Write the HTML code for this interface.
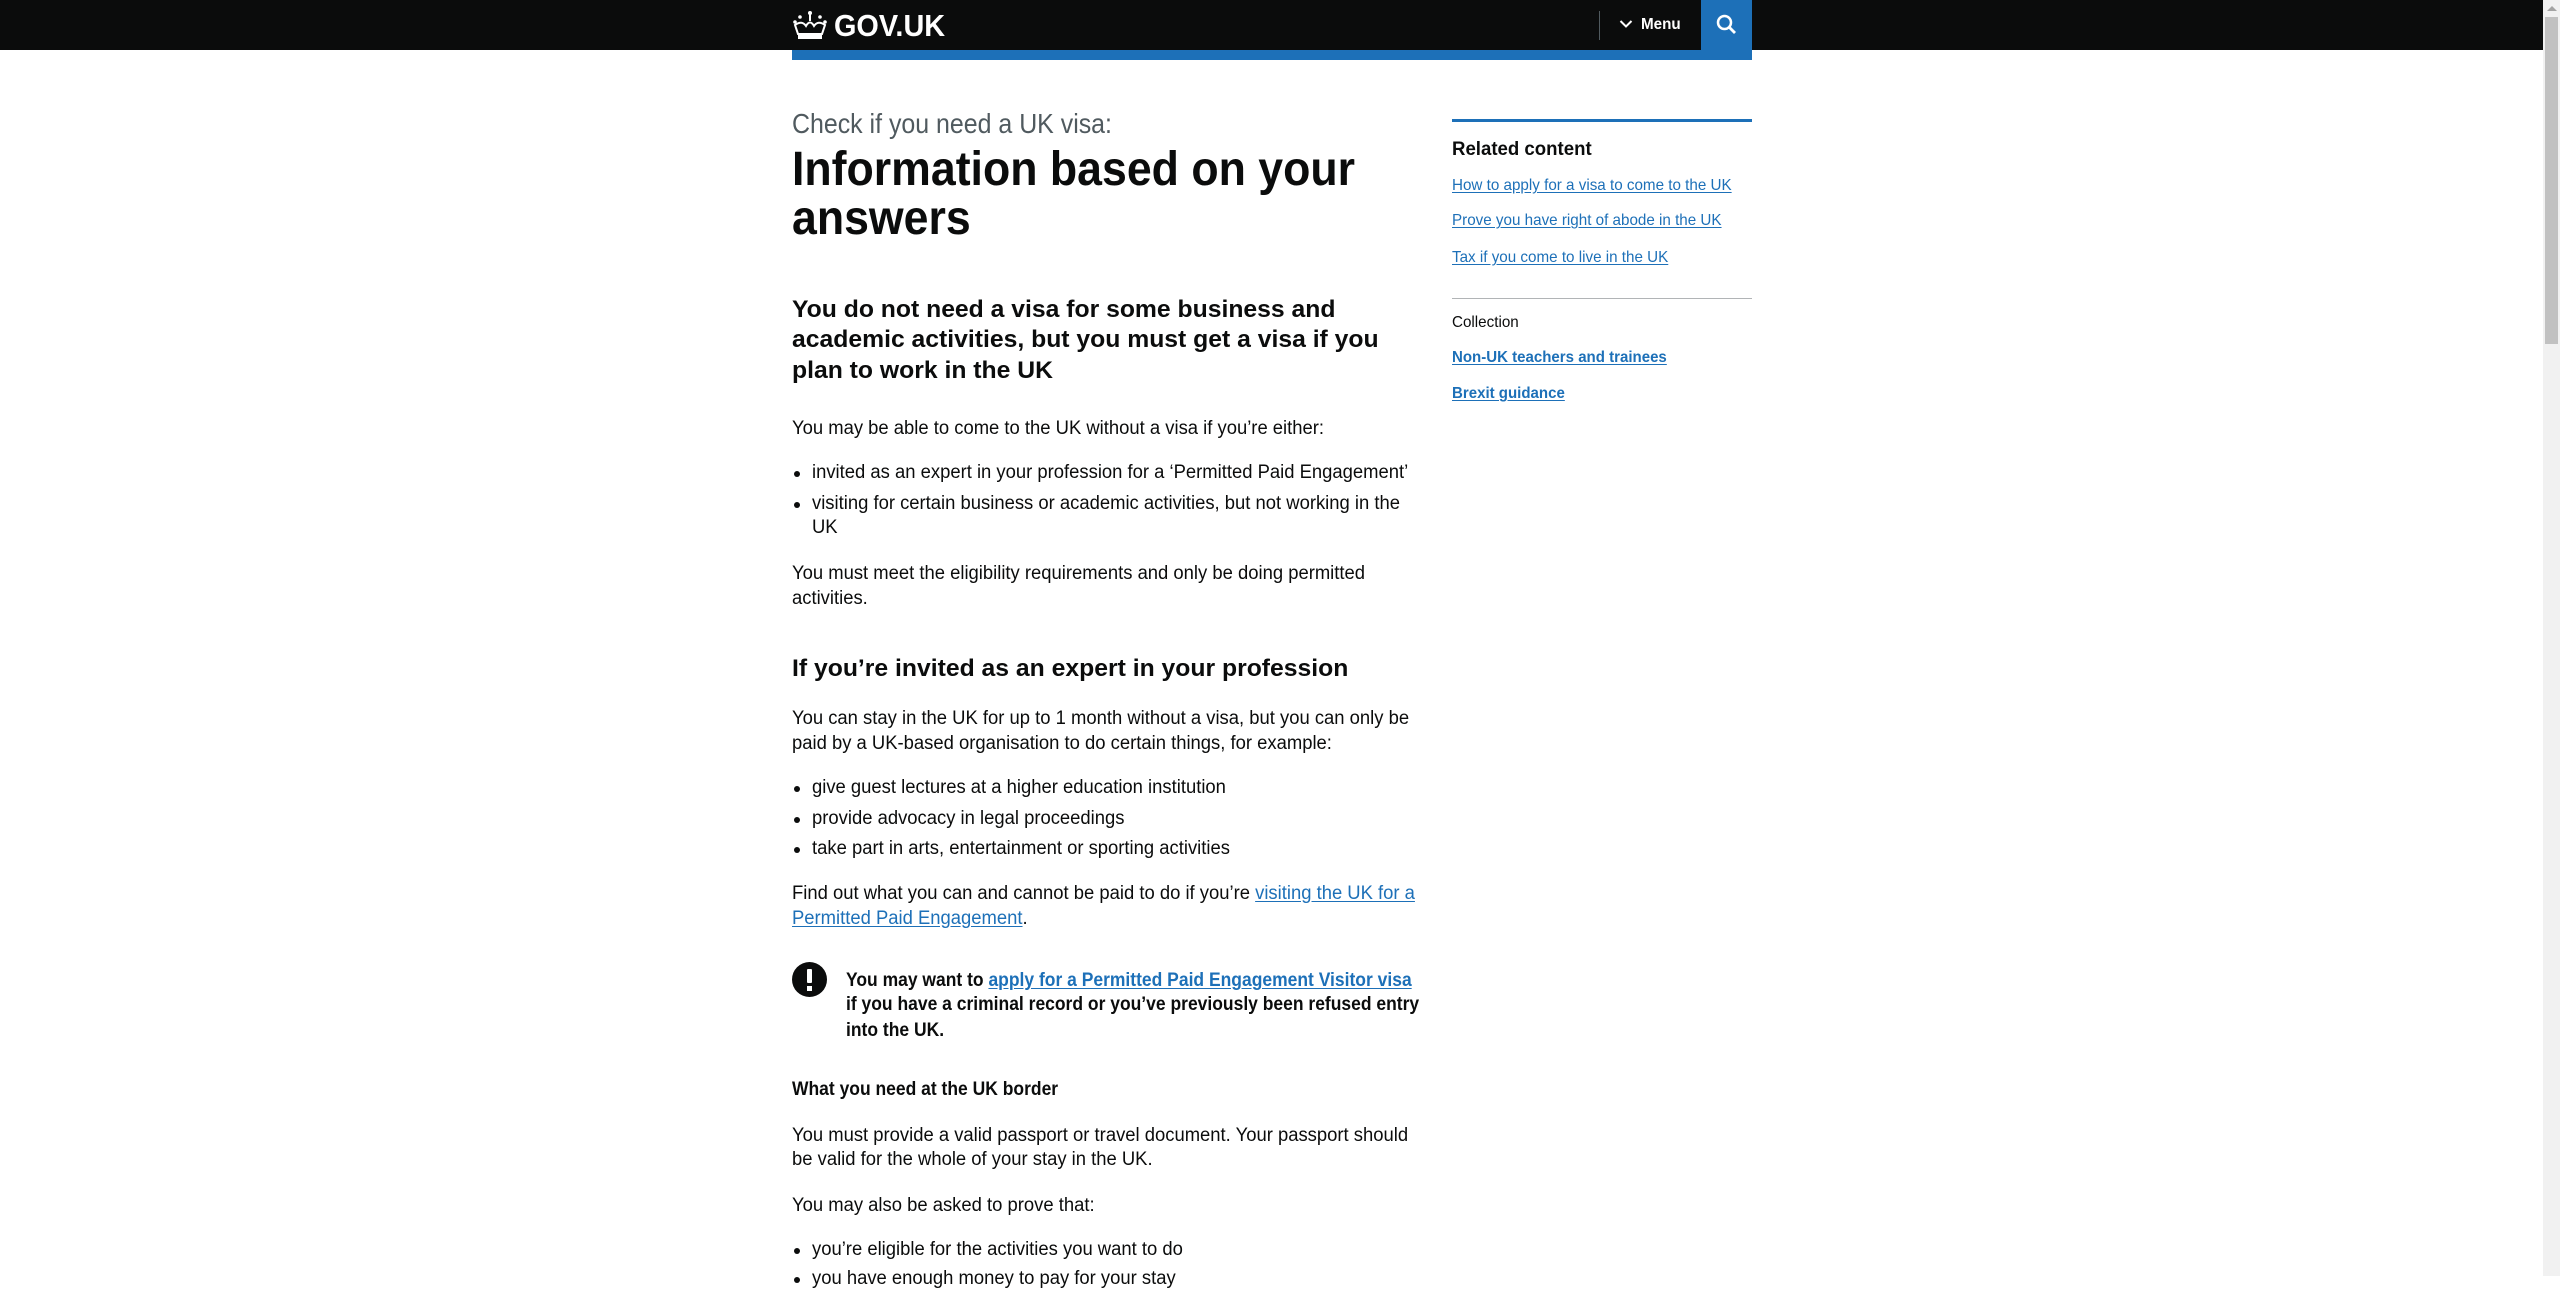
<!DOCTYPE html>
<html><head><meta charset="utf-8">
<style>
html,body{margin:0;padding:0;width:2560px;height:1276px;overflow:hidden;background:#fff;font-family:"Liberation Sans",Arial,sans-serif;color:#0b0c0c}
.a{position:absolute;white-space:nowrap;line-height:1;transform-origin:0 50%}
.b{font-size:19px;transform:scaleX(.97)}
.bb{font-size:19px;font-weight:bold;transform:scaleX(.92)}
.h2{font-size:24px;font-weight:bold;transform:scaleX(1.03)}
.h1{font-size:48px;font-weight:bold;transform:scaleX(.93)}
.s{font-size:16px;transform:scaleX(.95)}
.sb{font-size:16px;font-weight:bold;transform:scaleX(.94)}
a{color:#1d70b8;text-decoration:underline;text-underline-offset:2px}
.dot{position:absolute;width:6px;height:6px;border-radius:50%;background:#0b0c0c}
#w{position:absolute;left:0;top:1px;width:2560px;height:1276px}
</style></head><body>
<div style="position:absolute;left:0;top:0;width:2543px;height:50px;background:#0b0c0c"></div>
<svg style="position:absolute;left:792px;top:10px" width="36" height="30" viewBox="0 0 36 30">
<g fill="#fff"><circle cx="18" cy="3" r="2"/><rect x="17" y="3" width="2" height="8"/><circle cx="8" cy="7" r="1.8"/><circle cx="28" cy="7" r="1.8"/><circle cx="3" cy="12" r="1.8"/><circle cx="33" cy="12" r="1.8"/>
<path d="M3 15 Q10 10 14 16 Q18 9 22 16 Q26 10 33 15 L30 24 L6 24Z" fill="none" stroke="#fff" stroke-width="2"/>
<rect x="6" y="25" width="24" height="4"/></g></svg>
<div class="a" style="left:834px;top:10px;font-size:31px;font-weight:bold;color:#fff;transform:scaleX(.93)">GOV.UK</div>
<div style="position:absolute;left:1599px;top:11px;width:1px;height:29px;background:#505a5f"></div>
<svg style="position:absolute;left:1619px;top:19px" width="14" height="10" viewBox="0 0 14 10"><path d="M1.5 2 L7 7.5 L12.5 2" fill="none" stroke="#fff" stroke-width="2"/></svg>
<div class="a" style="left:1641px;top:17px;font-size:16px;font-weight:bold;color:#fff;transform:scaleX(.95)">Menu</div>
<div style="position:absolute;left:1701px;top:0;width:51px;height:50px;background:#1d70b8"></div>
<svg style="position:absolute;left:1715px;top:13px" width="24" height="24" viewBox="0 0 24 24"><circle cx="9.5" cy="9.5" r="6.5" fill="none" stroke="#fff" stroke-width="2.5"/><path d="M14.5 14.5 L20 20" stroke="#fff" stroke-width="2.8"/></svg>
<div style="position:absolute;left:792px;top:50px;width:960px;height:10px;background:#1d70b8"></div>

<div style="position:absolute;left:2543px;top:0;width:17px;height:1276px;background:#f1f1f1"></div>
<div style="position:absolute;left:2545px;top:17px;width:13px;height:327px;background:#c1c1c1"></div>
<svg style="position:absolute;left:2547px;top:5px" width="10" height="7"><path d="M0 6 L5 1 L10 6Z" fill="#a3a3a3"/></svg>

<div id="w">
<div class="a" style="left:792px;top:109px;font-size:28px;color:#505a5f;transform:scaleX(.89)">Check if you need a UK visa:</div>
<div class="a h1" style="left:792px;top:145px">Information based on your</div>
<div class="a h1" style="left:792px;top:194px">answers</div>

<div class="a h2" style="left:792px;top:297px">You do not need a visa for some business and</div>
<div class="a h2" style="left:792px;top:327px">academic activities, but you must get a visa if you</div>
<div class="a h2" style="left:792px;top:358px">plan to work in the UK</div>

<div class="a b" style="left:792px;top:418px">You may be able to come to the UK without a visa if you’re either:</div>
<div class="dot" style="left:794px;top:470px"></div>
<div class="a b" style="left:812px;top:462px">invited as an expert in your profession for a ‘Permitted Paid Engagement’</div>
<div class="dot" style="left:794px;top:501px"></div>
<div class="a b" style="left:812px;top:493px">visiting for certain business or academic activities, but not working in the</div>
<div class="a b" style="left:812px;top:517px">UK</div>
<div class="a b" style="left:792px;top:563px">You must meet the eligibility requirements and only be doing permitted</div>
<div class="a b" style="left:792px;top:588px">activities.</div>

<div class="a h2" style="left:792px;top:656px">If you’re invited as an expert in your profession</div>
<div class="a b" style="left:792px;top:708px">You can stay in the UK for up to 1 month without a visa, but you can only be</div>
<div class="a b" style="left:792px;top:733px">paid by a UK-based organisation to do certain things, for example:</div>
<div class="dot" style="left:794px;top:785px"></div>
<div class="a b" style="left:812px;top:777px">give guest lectures at a higher education institution</div>
<div class="dot" style="left:794px;top:816px"></div>
<div class="a b" style="left:812px;top:808px">provide advocacy in legal proceedings</div>
<div class="dot" style="left:794px;top:846px"></div>
<div class="a b" style="left:812px;top:838px">take part in arts, entertainment or sporting activities</div>
<div class="a b" style="left:792px;top:883px">Find out what you can and cannot be paid to do if you’re <a>visiting the UK for a</a></div>
<div class="a b" style="left:792px;top:908px"><a>Permitted Paid Engagement</a>.</div>

<div style="position:absolute;left:792px;top:961px;width:35px;height:35px;border-radius:50%;background:#0b0c0c"></div>
<div style="position:absolute;left:807px;top:968px;width:5px;height:14px;background:#fff;border-radius:1px"></div>
<div style="position:absolute;left:807px;top:985px;width:5px;height:5px;background:#fff"></div>
<div class="a bb" style="left:846px;top:970px">You may want to <a>apply for a Permitted Paid Engagement Visitor visa</a></div>
<div class="a bb" style="left:846px;top:994px">if you have a criminal record or you’ve previously been refused entry</div>
<div class="a bb" style="left:846px;top:1020px">into the UK.</div>

<div class="a bb" style="left:792px;top:1079px">What you need at the UK border</div>
<div class="a b" style="left:792px;top:1125px">You must provide a valid passport or travel document. Your passport should</div>
<div class="a b" style="left:792px;top:1149px">be valid for the whole of your stay in the UK.</div>
<div class="a b" style="left:792px;top:1195px">You may also be asked to prove that:</div>
<div class="dot" style="left:794px;top:1247px"></div>
<div class="a b" style="left:812px;top:1239px">you’re eligible for the activities you want to do</div>
<div class="dot" style="left:794px;top:1276px"></div>
<div class="a b" style="left:812px;top:1268px">you have enough money to pay for your stay</div>

<div style="position:absolute;left:1452px;top:118px;width:300px;height:3px;background:#1d70b8"></div>
<div class="a" style="left:1452px;top:139px;font-size:19px;font-weight:bold;transform:scaleX(.98)">Related content</div>
<div class="a s" style="left:1452px;top:177px"><a>How to apply for a visa to come to the UK</a></div>
<div class="a s" style="left:1452px;top:212px"><a>Prove you have right of abode in the UK</a></div>
<div class="a s" style="left:1452px;top:249px"><a>Tax if you come to live in the UK</a></div>
<div style="position:absolute;left:1452px;top:297px;width:300px;height:1px;background:#b1b4b6"></div>
<div class="a s" style="left:1452px;top:314px">Collection</div>
<div class="a sb" style="left:1452px;top:349px"><a>Non-UK teachers and trainees</a></div>
<div class="a sb" style="left:1452px;top:385px"><a>Brexit guidance</a></div>
</div>
</body></html>
